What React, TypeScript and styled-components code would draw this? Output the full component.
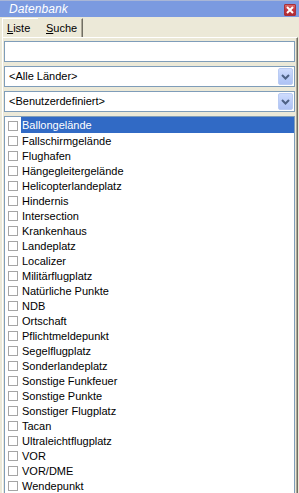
import React from "react";
import styled, { createGlobalStyle } from "styled-components";

const Global = createGlobalStyle`
  html, body { margin: 0; padding: 0; background: #ece9d8; }
  body { width: 299px; height: 493px; overflow: hidden; }
  * { box-sizing: border-box; }
`;

const Window = styled.div`
  width: 299px;
  height: 493px;
  display: flex;
  flex-direction: column;
  overflow: hidden;
  background: #ece9d8;
  font-family: "Liberation Sans", Arial, sans-serif;
  font-size: 11px;
  color: #000;
`;

const TitleBar = styled.div`
  height: 17px;
  flex: none;
  border-top: 1px solid #a9b6d6;
  background: #7b9ae0;
  display: flex;
  align-items: center;
  justify-content: space-between;
  padding: 0 3px 0 9px;
`;

const Title = styled.span`
  color: #fff;
  font-style: italic;
  font-size: 12px;
  letter-spacing: 0.1px;
  line-height: 16px;
`;

const CloseButton = styled.div`
  width: 12px;
  height: 12px;
  margin-top: 1px;
  border: 1px solid #a8303a;
  border-radius: 1px;
  background: linear-gradient(#d86a6a, #c0363e 50%, #b02a32);
  display: flex;
  align-items: center;
  justify-content: center;
`;

const TabStrip = styled.div`
  height: 20px;
  flex: none;
  display: flex;
  align-items: flex-end;
  padding-left: 2px;
`;

const Tab = styled.div<{ $first?: boolean }>`
  height: 19px;
  display: flex;
  align-items: center;
  padding: ${(p) => (p.$first ? "0 0 0 4px" : "0 0 0 8px")};
  width: ${(p) => (p.$first ? "36px" : "45px")};
  border-top: ${(p) => (p.$first ? "1px solid #fff" : "1px solid #ece9d8")};
  border-left: ${(p) => (p.$first ? "1px solid #fff" : "none")};
  border-right: ${(p) => (p.$first ? "none" : "1px solid #716f64")};
  box-shadow: ${(p) => (p.$first ? "none" : "inset -1px 0 #aca899")};
  u { text-decoration: underline; }
  font-size: 11px;
`;

const Panel = styled.div`
  flex: 1;
  min-height: 0;
  width: 296px;
  margin-left: 2px;
  border-top: 1px solid #fff;
  border-left: 1px solid #fff;
  border-right: 1px solid #716f64;
  box-shadow: inset -1px 0 #aca899;
  padding: 3px 2px 0 1px;
  display: flex;
  flex-direction: column;
  gap: 4px;
  overflow: hidden;
`;

const TextBox = styled.div`
  height: 21px;
  flex: none;
  background: #fff;
  border: 1px solid #7f9db9;
`;

const Select = styled.div`
  height: 21px;
  flex: none;
  background: #fff;
  border: 1px solid #7f9db9;
  display: flex;
  align-items: center;
  justify-content: space-between;
  padding: 0 1px 0 4px;
`;

const SelectText = styled.span`
  font-size: 11px;
  line-height: 19px;
`;

const DropButton = styled.div`
  width: 15px;
  height: 17px;
  border: 1px solid #b9cbf3;
  border-radius: 2px;
  background: linear-gradient(#cfdcfd, #b8cbf8 60%, #aec2f4);
  display: flex;
  align-items: center;
  justify-content: center;
`;

const ListBox = styled.div`
  flex: none;
  background: #fff;
  border: 1px solid #7f9db9;
  display: flex;
  flex-direction: column;
`;

const Row = styled.div`
  height: 15px;
  display: flex;
  align-items: center;
  padding-left: 3px;
  &:first-child { height: 16px; }
`;

const Check = styled.span`
  width: 10px;
  height: 10px;
  margin-top: 1px;
  border: 1px solid #a5a5a5;
  background: #fff;
  flex: none;
`;

const Label = styled.span<{ $selected?: boolean }>`
  flex: 1;
  margin-left: 3px;
  height: 100%;
  display: flex;
  align-items: center;
  padding-left: 1px;
  font-size: 11px;
  background: ${(p) => (p.$selected ? "#316ac5" : "transparent")};
  color: ${(p) => (p.$selected ? "#fff" : "#000")};
`;

const items = [
  "Ballongelände",
  "Fallschirmgelände",
  "Flughafen",
  "Hängegleitergelände",
  "Helicopterlandeplatz",
  "Hindernis",
  "Intersection",
  "Krankenhaus",
  "Landeplatz",
  "Localizer",
  "Militärflugplatz",
  "Natürliche Punkte",
  "NDB",
  "Ortschaft",
  "Pflichtmeldepunkt",
  "Segelflugplatz",
  "Sonderlandeplatz",
  "Sonstige Funkfeuer",
  "Sonstige Punkte",
  "Sonstiger Flugplatz",
  "Tacan",
  "Ultraleichtflugplatz",
  "VOR",
  "VOR/DME",
  "Wendepunkt",
];

const Chevron = () => (
  <svg width="9" height="6" viewBox="0 0 9 6">
    <path d="M1 1 L4.5 4.5 L8 1" fill="none" stroke="#4d6185" strokeWidth="2" />
  </svg>
);

export default function App() {
  return (
    <>
      <Global />
      <Window>
        <TitleBar>
          <Title>Datenbank</Title>
          <CloseButton>
            <svg width="8" height="8" viewBox="0 0 8 8">
              <path d="M1 1 L7 7 M7 1 L1 7" stroke="#fff" strokeWidth="2" />
            </svg>
          </CloseButton>
        </TitleBar>
        <TabStrip>
          <Tab $first>
            <span><u>L</u>iste</span>
          </Tab>
          <Tab>
            <span><u>S</u>uche</span>
          </Tab>
        </TabStrip>
        <Panel>
          <TextBox />
          <Select>
            <SelectText>&lt;Alle Länder&gt;</SelectText>
            <DropButton><Chevron /></DropButton>
          </Select>
          <Select>
            <SelectText>&lt;Benutzerdefiniert&gt;</SelectText>
            <DropButton><Chevron /></DropButton>
          </Select>
          <ListBox>
            {items.map((it, i) => (
              <Row key={it}>
                <Check />
                <Label $selected={i === 0}>{it}</Label>
              </Row>
            ))}
          </ListBox>
        </Panel>
      </Window>
    </>
  );
}
